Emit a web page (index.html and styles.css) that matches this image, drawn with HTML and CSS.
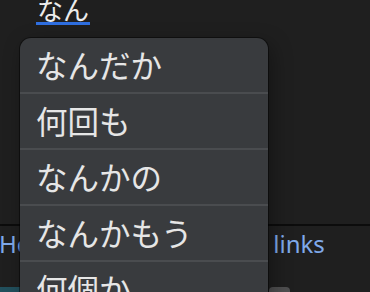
FILE: index.html
```html
<!DOCTYPE html>
<html lang="ja">
<head>
<meta charset="utf-8">
<link rel="stylesheet" href="styles.css">
</head>
<body>
<div class="page">
  <div class="top">
    <span class="query">なん</span>
  </div>
  <div class="bottom">
    <div class="links-row">
      <span class="link first">Help</span>
      <span class="link second">links</span>
    </div>
    <div class="toolbar">
      <span class="teal"></span>
      <span class="btn"></span>
    </div>
  </div>
  <ul class="popup">
    <li>なんだか</li>
    <li>何回も</li>
    <li>なんかの</li>
    <li>なんかもう</li>
    <li>何個か</li>
  </ul>
</div>
</body>
</html>
```
FILE: styles.css
```css
html, body {
  margin: 0;
  padding: 0;
  background: #1f1f1f;
  overflow: hidden;
}
.page {
  position: relative;
  width: 370px;
  height: 292px;
  overflow: hidden;
  font-family: "Noto Sans CJK JP", "Noto Sans", sans-serif;
}
.top {
  height: 224px;
  border-bottom: 2px solid #0c0c0c;
  padding-left: 36px;
}
.query {
  display: inline-block;
  font-size: 26px;
  line-height: 26px;
  color: #ececec;
  margin-top: -4px;
  padding: 0 1px;
  border-bottom: 3px solid #2f6fe0;
}
.bottom {
  display: flex;
  flex-direction: column;
}
.links-row {
  display: flex;
  height: 34px;
  align-items: center;
}
.link {
  font-family: "Noto Sans", sans-serif;
  font-size: 24px;
  color: #7fa9ea;
}
.first {
  margin-left: -1px;
}
.second {
  margin-left: 222px;
}
.toolbar {
  display: flex;
  margin-top: 27px;
  height: 10px;
}
.teal {
  width: 20px;
  background: #22505d;
}
.btn {
  width: 21px;
  margin-left: 249px;
  background: #4f4f50;
  border-radius: 4px 4px 0 0;
}
.popup {
  position: absolute;
  left: 20px;
  top: 38px;
  width: 248px;
  margin: 0;
  padding: 0;
  list-style: none;
  background: #393b3e;
  border-radius: 11px;
  box-shadow: 0 0 0 1px rgba(0,0,0,0.45), 4px 6px 20px rgba(0,0,0,0.35);
  overflow: hidden;
}
.popup li {
  height: 54px;
  line-height: 52px;
  padding-left: 16px;
  font-size: 31.5px;
  color: #e6e6e6;
  border-bottom: 2px solid #4a4c4f;
  white-space: nowrap;
}
```
